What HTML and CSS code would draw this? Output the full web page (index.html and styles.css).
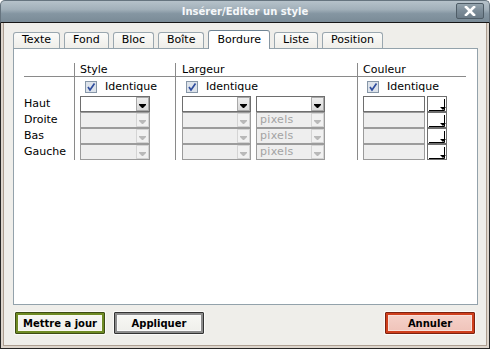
FILE: index.html
```html
<!DOCTYPE html>
<html lang="fr">
<head>
<meta charset="utf-8">
<title>Insérer/Editer un style</title>
<link rel="stylesheet" href="styles.css">
</head>
<body>
<div class="dialog">
  <div class="titlebar">
    <span class="title">Insérer/Editer un style</span>
    <span class="close"><svg width="12" height="10" viewBox="0 0 12 10"><path d="M2 1 L10 9 M10 1 L2 9" stroke="#fff" stroke-width="2.6" stroke-linecap="square"/></svg></span>
  </div>
  <div class="frame">
    <div class="body">
      <div class="tabs">
        <div class="tab">Texte</div>
        <div class="tab">Fond</div>
        <div class="tab">Bloc</div>
        <div class="tab">Boîte</div>
        <div class="tab active">Bordure</div>
        <div class="tab">Liste</div>
        <div class="tab">Position</div>
      </div>
      <div class="panel">
        <div class="grid">
          <div class="group labels">
            <div class="head"></div>
            <div class="checkrow"></div>
            <div class="row">Haut</div>
            <div class="row">Droite</div>
            <div class="row">Bas</div>
            <div class="row">Gauche</div>
          </div>
          <div class="group sep g-style">
            <div class="head">Style</div>
            <div class="checkrow"><svg class="cb" width="12" height="12" viewBox="0 0 12 12"><rect x="0.5" y="0.5" width="11" height="11" fill="#dde3eb" stroke="#8797a8"/><path d="M3 6 L5 9 L9.5 2.5" fill="none" stroke="#2f4d9e" stroke-width="1.7"/></svg><span>Identique</span></div>
            <div class="row"><div class="select w-style"><span class="val"></span><span class="arr"><svg width="7" height="4" viewBox="0 0 7 4"><path d="M0 0H7V1L4 4H3L0 1Z" fill="#000"/></svg></span></div></div>
            <div class="row"><div class="select w-style off"><span class="val"></span><span class="arr"><svg width="7" height="4" viewBox="0 0 7 4"><path d="M0 0H7V1L4 4H3L0 1Z" fill="#b9b9b9"/></svg></span></div></div>
            <div class="row"><div class="select w-style off"><span class="val"></span><span class="arr"><svg width="7" height="4" viewBox="0 0 7 4"><path d="M0 0H7V1L4 4H3L0 1Z" fill="#b9b9b9"/></svg></span></div></div>
            <div class="row"><div class="select w-style off"><span class="val"></span><span class="arr"><svg width="7" height="4" viewBox="0 0 7 4"><path d="M0 0H7V1L4 4H3L0 1Z" fill="#b9b9b9"/></svg></span></div></div>
          </div>
          <div class="group sep g-width">
            <div class="head">Largeur</div>
            <div class="checkrow"><svg class="cb" width="12" height="12" viewBox="0 0 12 12"><rect x="0.5" y="0.5" width="11" height="11" fill="#dde3eb" stroke="#8797a8"/><path d="M3 6 L5 9 L9.5 2.5" fill="none" stroke="#2f4d9e" stroke-width="1.7"/></svg><span>Identique</span></div>
            <div class="row pair">
              <div class="select w-width"><span class="val"></span><span class="arr"><svg width="7" height="4" viewBox="0 0 7 4"><path d="M0 0H7V1L4 4H3L0 1Z" fill="#000"/></svg></span></div>
              <div class="select w-width"><span class="val"></span><span class="arr"><svg width="7" height="4" viewBox="0 0 7 4"><path d="M0 0H7V1L4 4H3L0 1Z" fill="#000"/></svg></span></div>
            </div>
            <div class="row pair">
              <div class="select w-width off"><span class="val"></span><span class="arr"><svg width="7" height="4" viewBox="0 0 7 4"><path d="M0 0H7V1L4 4H3L0 1Z" fill="#b9b9b9"/></svg></span></div>
              <div class="select w-width off"><span class="val">pixels</span><span class="arr"><svg width="7" height="4" viewBox="0 0 7 4"><path d="M0 0H7V1L4 4H3L0 1Z" fill="#b9b9b9"/></svg></span></div>
            </div>
            <div class="row pair">
              <div class="select w-width off"><span class="val"></span><span class="arr"><svg width="7" height="4" viewBox="0 0 7 4"><path d="M0 0H7V1L4 4H3L0 1Z" fill="#b9b9b9"/></svg></span></div>
              <div class="select w-width off"><span class="val">pixels</span><span class="arr"><svg width="7" height="4" viewBox="0 0 7 4"><path d="M0 0H7V1L4 4H3L0 1Z" fill="#b9b9b9"/></svg></span></div>
            </div>
            <div class="row pair">
              <div class="select w-width off"><span class="val"></span><span class="arr"><svg width="7" height="4" viewBox="0 0 7 4"><path d="M0 0H7V1L4 4H3L0 1Z" fill="#b9b9b9"/></svg></span></div>
              <div class="select w-width off"><span class="val">pixels</span><span class="arr"><svg width="7" height="4" viewBox="0 0 7 4"><path d="M0 0H7V1L4 4H3L0 1Z" fill="#b9b9b9"/></svg></span></div>
            </div>
          </div>
          <div class="group sep g-color">
            <div class="head">Couleur</div>
            <div class="checkrow"><svg class="cb" width="12" height="12" viewBox="0 0 12 12"><rect x="0.5" y="0.5" width="11" height="11" fill="#dde3eb" stroke="#8797a8"/><path d="M3 6 L5 9 L9.5 2.5" fill="none" stroke="#2f4d9e" stroke-width="1.7"/></svg><span>Identique</span></div>
            <div class="row pair-c"><div class="input"></div><svg class="picker" width="20" height="16" viewBox="0 0 20 16"><rect x="0.5" y="0.5" width="19" height="15" fill="#fff" stroke="#6f6f6f"/><path d="M17.5 3V14.5H2" fill="none" stroke="#000"/><path d="M13 11H19L16 14Z" fill="#000"/></svg></div>
            <div class="row pair-c"><div class="input off"></div><svg class="picker" width="20" height="16" viewBox="0 0 20 16"><rect x="0.5" y="0.5" width="19" height="15" fill="#fff" stroke="#6f6f6f"/><path d="M17.5 3V14.5H2" fill="none" stroke="#000"/><path d="M13 11H19L16 14Z" fill="#000"/></svg></div>
            <div class="row pair-c"><div class="input off"></div><svg class="picker" width="20" height="16" viewBox="0 0 20 16"><rect x="0.5" y="0.5" width="19" height="15" fill="#fff" stroke="#6f6f6f"/><path d="M17.5 3V14.5H2" fill="none" stroke="#000"/><path d="M13 11H19L16 14Z" fill="#000"/></svg></div>
            <div class="row pair-c"><div class="input off"></div><svg class="picker" width="20" height="16" viewBox="0 0 20 16"><rect x="0.5" y="0.5" width="19" height="15" fill="#fff" stroke="#6f6f6f"/><path d="M17.5 3V14.5H2" fill="none" stroke="#000"/><path d="M13 11H19L16 14Z" fill="#000"/></svg></div>
          </div>
        </div>
      </div>
      <div class="buttons">
        <button class="btn btn-update">Mettre a jour</button>
        <button class="btn btn-apply">Appliquer</button>
        <button class="btn btn-cancel">Annuler</button>
      </div>
    </div>
  </div>
</div>
</body>
</html>
```

FILE: styles.css
```css
html, body {
  margin: 0;
  padding: 0;
  background: #ffffff;
}

body {
  font-family: "DejaVu Sans", Verdana, sans-serif;
  font-size: 11px;
  color: #000;
}

.dialog {
  width: 490px;
  height: 349px;
  display: flex;
  flex-direction: column;
  box-sizing: border-box;
}

.titlebar {
  height: 23px;
  box-sizing: border-box;
  border: 1px solid #66747f;
  border-bottom-color: #161616;
  border-radius: 5px 5px 0 0;
  background: linear-gradient(to bottom, #b6c2ca 0%, #a2b0ba 40%, #8596a2 60%, #7a8b97 100%);
  display: grid;
  grid-template-columns: 1fr auto 1fr;
}

.title {
  grid-column: 2;
  align-self: center;
  color: #f6f8fa;
  font-weight: bold;
  font-size: 10px;
  line-height: 12px;
  padding-top: 1px;
}

.close {
  grid-column: 3;
  justify-self: end;
  align-self: start;
  margin: 2px 5px 0 0;
  width: 28px;
  height: 16px;
  box-sizing: border-box;
  border: 1px solid #4f5d67;
  border-radius: 2px;
  background: linear-gradient(to bottom, #95a4ae 0%, #7b8b97 50%, #6c7c88 100%);
  display: flex;
  align-items: center;
  justify-content: center;
}

.frame {
  flex: 1;
  border: 1px solid #262626;
  border-top: 0;
  min-height: 0;
}

.body {
  height: 100%;
  box-sizing: border-box;
  border: 2px solid #ddd5cc;
  border-top: 0;
  box-shadow: inset 1px 0 #ad9f92, inset -1px 0 #ad9f92, inset 0 -1px #ad9f92;
  background: #efeeea;
  padding: 7px 9px 0 10px;
}

/* Tabs */
.tabs {
  display: flex;
  align-items: flex-end;
  gap: 4px;
  height: 18px;
}

.tab {
  height: 16px;
  box-sizing: border-box;
  border: 1px solid #9aa7af;
  border-bottom: 0;
  border-radius: 3px 3px 0 0;
  padding: 0 8px;
  line-height: 14px;
  background: linear-gradient(to bottom, #fbfbf9 0%, #efeee9 100%);
  white-space: nowrap;
}

.tab.active {
  height: 19px;
  margin-bottom: -1px;
  padding-top: 2px;
  background: #ffffff;
  border-color: #8796a2;
  border-top: 1px solid #6f8494;
  position: relative;
  z-index: 1;
}

/* Panel */
.panel {
  height: 257px;
  box-sizing: border-box;
  border: 1px solid #93a2ab;
  background: #ffffff;
  padding: 14px 0 0 10px;
}

.grid {
  display: flex;
}

.group {
  display: flex;
  flex-direction: column;
  box-sizing: border-box;
}

.group.sep {
  border-left: 1px solid #8a8a8a;
}

.labels { width: 50px; }
.g-style { width: 101px; padding-left: 5px; }
.g-width { width: 182px; padding-left: 6px; }
.g-color { width: 109px; padding-left: 5px; }

.head {
  height: 14px;
  box-sizing: border-box;
  line-height: 13px;
  border-bottom: 1px solid #8a8a8a;
  white-space: nowrap;
}

.g-style .head,
.g-width .head,
.g-color .head {
  margin-left: -6px;
  padding-left: 6px;
}

.g-style .head,
.g-color .head {
  margin-left: -5px;
  padding-left: 5px;
}

.checkrow {
  height: 19px;
  box-sizing: border-box;
  padding-top: 4px;
  display: flex;
  align-items: flex-start;
  line-height: 12px;
}

.cb {
  display: block;
  margin-left: 4px;
  margin-right: 8px;
  flex: none;
}

.g-style .cb { margin-left: 5px; }

.row {
  height: 16px;
  line-height: 16px;
  white-space: nowrap;
}

.pair {
  display: flex;
  gap: 5px;
}

.pair-c {
  display: flex;
  gap: 2px;
}

/* Select boxes */
.select {
  height: 16px;
  box-sizing: border-box;
  border: 1px solid #6e6e6e;
  background: #ffffff;
  display: flex;
}

.w-style { width: 70px; }
.w-width { width: 69px; }

.select .val {
  flex: 1;
  padding-left: 3px;
  line-height: 14px;
  color: #a3a3a3;
  letter-spacing: 0.3px;
}

.select .arr {
  width: 13px;
  box-sizing: border-box;
  border: 1px solid #a9a9a9;
  margin: 0;
  background: linear-gradient(to bottom, #eeeeee, #d9d9d9);
  display: flex;
  align-items: center;
  justify-content: center;
  padding-top: 3px;
}

.select.off {
  border-color: #9b9b9b;
  background: #eeeeee;
}

.select.off .arr {
  border-color: #d4d4d4;
  background: #f1f1f1;
}

.input {
  width: 62px;
  height: 16px;
  box-sizing: border-box;
  border: 1px solid #6e6e6e;
  background: #ffffff;
}

.input.off {
  border-color: #9b9b9b;
  background: #eeeeee;
}

.picker {
  display: block;
  flex: none;
}

/* Buttons */
.buttons {
  display: flex;
  margin-top: 7px;
  padding: 0 3px 0 2px;
  gap: 9px;
}

.btn {
  width: 90px;
  height: 22px;
  box-sizing: border-box;
  font-family: "DejaVu Sans", Verdana, sans-serif;
  font-size: 10px;
  font-weight: bold;
  color: #000;
  padding: 0;
  border: 1px solid #3a3a3a;
  border-radius: 1px;
  background: linear-gradient(to bottom, #f8f8f5 0%, #eeeeea 100%);
  box-shadow: inset 0 0 0 2px #7f7f7f, inset 0 0 0 3px #ffffff, 0 0 0 1px #fbfbf9;
}

.btn-update {
  border-color: #3e4c14;
  box-shadow: inset 0 0 0 2px #6f8b25, inset 0 0 0 3px #fafaf2, 0 0 0 1px #fbfbf9;
}

.btn-apply {
  border-color: #333333;
  box-shadow: inset 0 0 0 2px #8c8c8c, inset 0 0 0 3px #fafafa, 0 0 0 1px #fbfbf9;
}

.btn-cancel {
  margin-left: auto;
  border-color: #7e2210;
  background: linear-gradient(to bottom, #f6d3cb 0%, #efc2b8 100%);
  box-shadow: inset 0 0 0 2px #cf3f1d, inset 0 0 0 3px #f8e0da, 0 0 0 1px #fbfbf9;
}
```
